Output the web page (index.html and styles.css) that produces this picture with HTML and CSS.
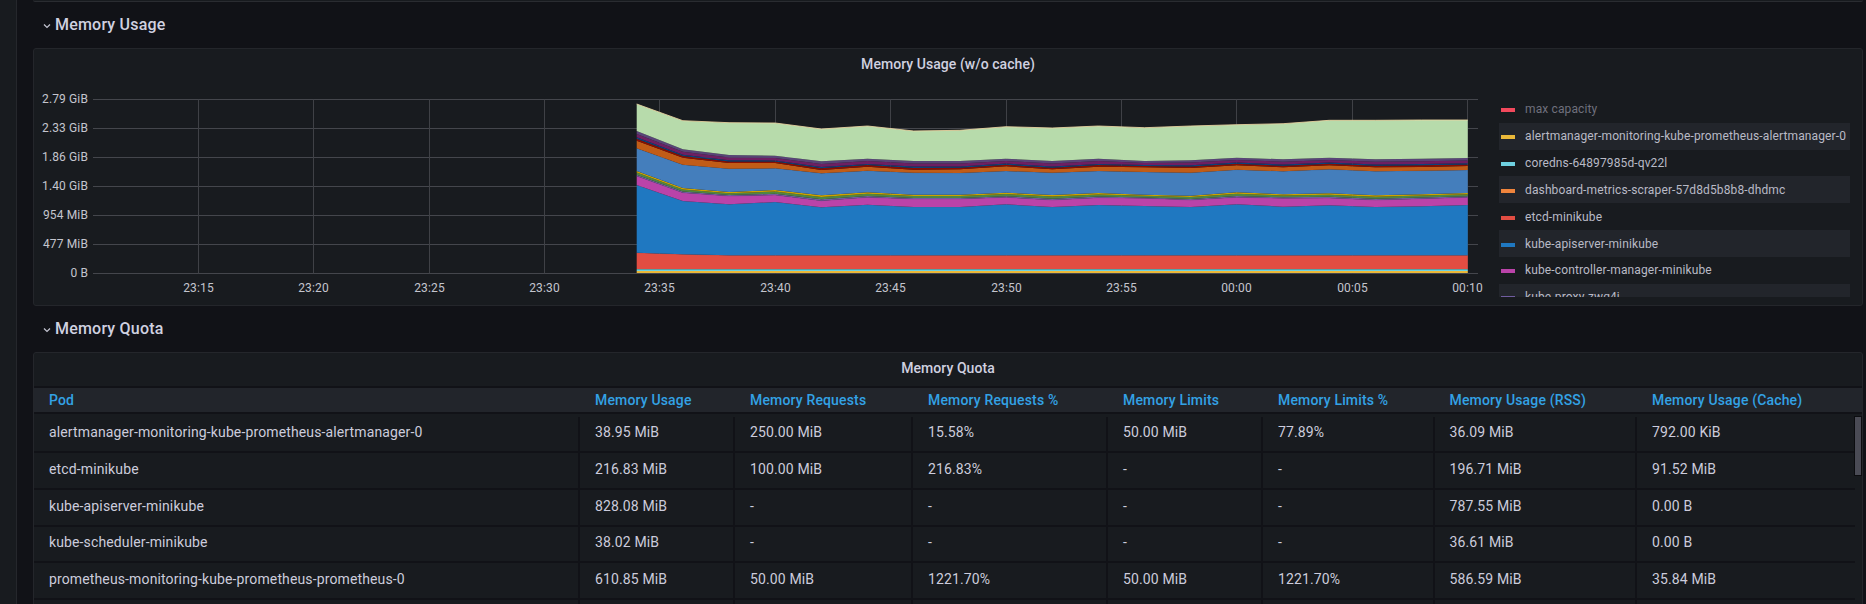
FILE: index.html
```html
<!DOCTYPE html>
<html lang="en">
<head>
  <meta charset="UTF-8">
  <title>Memory Usage</title>
  <link rel="stylesheet" href="styles.css">
</head>
<body>
<div class="sidebar"></div>
<div class="main">
  <div class="panel-sliver"></div>

  <div class="row-title">
    <svg class="chevron" width="8" height="6" viewBox="0 0 8 6"><path d="M1 1.5 L4 4.5 L7 1.5" fill="none" stroke="#c4c5d2" stroke-width="1.2"/></svg>
    Memory Usage
  </div>
  <div class="panel graph-panel">
    <div class="panel-title">Memory Usage (w/o cache)</div>
    <div class="graph-body">
      <svg id="chart" class="chart" width="1460" height="210"></svg>
      <div class="legend">
        <div class="legend-row dim"><span class="stripe s-maxcap"></span>max capacity</div>
        <div class="legend-row"><span class="stripe s-alert"></span>alertmanager-monitoring-kube-prometheus-alertmanager-0</div>
        <div class="legend-row"><span class="stripe s-coredns"></span>coredns-64897985d-qv22l</div>
        <div class="legend-row"><span class="stripe s-dash"></span>dashboard-metrics-scraper-57d8d5b8b8-dhdmc</div>
        <div class="legend-row"><span class="stripe s-etcd"></span>etcd-minikube</div>
        <div class="legend-row"><span class="stripe s-api"></span>kube-apiserver-minikube</div>
        <div class="legend-row"><span class="stripe s-ctrl"></span>kube-controller-manager-minikube</div>
        <div class="legend-row"><span class="stripe s-proxy"></span>kube-proxy-zwg4j</div>
      </div>
    </div>
  </div>

  <div class="row-title">
    <svg class="chevron" width="8" height="6" viewBox="0 0 8 6"><path d="M1 1.5 L4 4.5 L7 1.5" fill="none" stroke="#c4c5d2" stroke-width="1.2"/></svg>
    Memory Quota
  </div>
  <div class="panel table-panel">
    <div class="panel-title short">Memory Quota</div>
    <div class="thead cols">
      <div>Pod</div>
      <div>Memory Usage</div>
      <div>Memory Requests</div>
      <div>Memory Requests %</div>
      <div>Memory Limits</div>
      <div>Memory Limits %</div>
      <div>Memory Usage (RSS)</div>
      <div>Memory Usage (Cache)</div>
    </div>
    <div class="tbody">
      <div class="tr cols">
        <div>alertmanager-monitoring-kube-prometheus-alertmanager-0</div>
        <div>38.95 MiB</div><div>250.00 MiB</div><div>15.58%</div><div>50.00 MiB</div><div>77.89%</div><div>36.09 MiB</div><div>792.00 KiB</div>
      </div>
      <div class="tr cols">
        <div>etcd-minikube</div>
        <div>216.83 MiB</div><div>100.00 MiB</div><div>216.83%</div><div>-</div><div>-</div><div>196.71 MiB</div><div>91.52 MiB</div>
      </div>
      <div class="tr cols">
        <div>kube-apiserver-minikube</div>
        <div>828.08 MiB</div><div>-</div><div>-</div><div>-</div><div>-</div><div>787.55 MiB</div><div>0.00 B</div>
      </div>
      <div class="tr cols">
        <div>kube-scheduler-minikube</div>
        <div>38.02 MiB</div><div>-</div><div>-</div><div>-</div><div>-</div><div>36.61 MiB</div><div>0.00 B</div>
      </div>
      <div class="tr cols">
        <div>prometheus-monitoring-kube-prometheus-prometheus-0</div>
        <div>610.85 MiB</div><div>50.00 MiB</div><div>1221.70%</div><div>50.00 MiB</div><div>1221.70%</div><div>586.59 MiB</div><div>35.84 MiB</div>
      </div>
      <div class="tr cols">
        <div></div><div></div><div></div><div></div><div></div><div></div><div></div><div></div>
      </div>
    </div>
    <div class="scroll-thumb"></div>
  </div>
</div>
<script src="chart.js"></script>
</body>
</html>
```

FILE: styles.css
```css
* {
    box-sizing: border-box;
}
html, body {
    margin: 0;
    height: 604px;
    overflow: hidden;
}
body {
    display: flex;
    background-color: #111217;
    color: #ccccdc;
    font-family: Roboto, "Liberation Sans", sans-serif;
    font-size: 14px;
    letter-spacing: 0.13px;
}
.sidebar {
    width: 17px;
    flex: none;
    background-color: #181b1f;
    border-right: 1px solid #25272c;
}
.main {
    flex: 1;
    padding: 0 3px 0 16px;
}
.panel-sliver {
    height: 2px;
    background-color: #181b1f;
    border-bottom: 1px solid #2a2c31;
    border-radius: 0 0 2px 2px;
}
.row-title {
    display: flex;
    align-items: center;
    height: 46px;
    padding: 0 0 2px 10px;
    font-size: 16px;
    font-weight: 500;
    letter-spacing: 0.2px;
    color: #d0d1e0;
}
.chevron {
    margin: 4px 4px 0 0;
}
.panel {
    position: relative;
    background-color: #181b1f;
    border: 1px solid #24262b;
    border-radius: 3px;
    overflow: hidden;
}
.panel-title {
    height: 32px;
    line-height: 31px;
    text-align: center;
    font-weight: 500;
    letter-spacing: 0.05px;
    color: #d0d1e0;
}
.panel-title.short {
    height: 33px;
}

/* graph */
.graph-panel {
    height: 258px;
}
.graph-body {
    display: flex;
    padding-top: 9px;
}
.chart {
    flex: none;
    display: block;
}
.chart text {
    font-size: 12px;
    fill: #c4c5ce;
}
.legend {
    width: 351px;
    height: 200.7px;
    margin: 6px 0 0 5px;
    overflow: hidden;
    font-size: 12px;
    color: #b9bac6;
}
.legend-row {
    display: flex;
    align-items: center;
    height: 26.83px;
    padding-left: 2px;
}
.legend-row:nth-child(even) {
    background-color: #22252b;
}
.legend-row.dim {
    color: #6f707d;
}
.stripe {
    width: 14px;
    height: 4px;
    margin: 2px 10px 0 0;
    flex: none;
}
.s-maxcap { background-color: #f2495c; }
.s-alert { background-color: #eab839; }
.s-coredns { background-color: #6ed0e0; }
.s-dash { background-color: #ef843c; }
.s-etcd { background-color: #e24d42; }
.s-api { background-color: #1f78c1; }
.s-ctrl { background-color: #ba43a9; }
.s-proxy { background-color: #705da0; }

/* table */
.table-panel {
    height: 300px;
}
.cols {
    display: grid;
    grid-template-columns: 546px 155px 178px 195px 155px 171.5px 202.5px 1fr;
}
.cols > div {
    padding-left: 15px;
    white-space: nowrap;
}
.thead {
    align-items: center;
    height: 28px;
    background-color: #22252b;
    border-top: 2px solid #111217;
    border-bottom: 2px solid #111217;
    color: #33a2e5;
    font-weight: 500;
    letter-spacing: 0.16px;
}
.tbody {
    width: 1821px;
    padding-top: 2.5px;
}
.tr {
    height: 36.7px;
    border-bottom: 2px solid #111217;
}
.tr > div {
    display: flex;
    align-items: center;
    border-right: 2px solid #111217;
    padding-bottom: 3px;
}
.tr > div:last-child {
    border-right: none;
}
.scroll-thumb {
    position: absolute;
    top: 63px;
    right: 0;
    width: 8px;
    height: 60px;
    background-color: #4a4b55;
    border: 1px solid #0c0d10;
}
```

FILE: chart.js
```js
// stacked area chart. y values below are in thirds of a pixel, measured from the top of the svg
const top_ = [42,92,98,99,117,108,123,121,110,114,108,113,108,104,101,91,91,90,90];
const purpleTop = [123,178,195,197,214,206,213,213,206,213,206,213,211,203,208,203,208,206,204];
const orangeTop = [152,203,219,219,240,230,239,238,229,238,230,232,234,226,232,226,232,231,228];
const steelTop = [175,224,236,235,250,242,248,249,243,248,243,246,248,239,244,238,244,242,240];
const yellowTop = [243,294,306,300,316,307,314,314,308,315,309,314,317,307,313,310,316,313,309];
const magentaTop = [258,308,318,315,332,322,327,327,322,330,323,325,330,322,325,324,330,326,322];
const blueTop = [285,333,343,336,352,344,351,351,343,351,345,348,351,343,350,346,351,349,345];
const redTop = top_.map((_, i) => (i === 0 ? 488 : i === 1 ? 493 : 496));
const flat = v => top_.map(() => v);
const between = (a, b, f) => a.map((v, i) => v + (b[i] - v) * f);

// third value: draw a faint edge along the top of the layer
const layers = [
    [flat(543), "#eab839"],
    [flat(540), "#6ed0e0"],
    [flat(537), "#57a3a6"],
    [redTop, "#e24d42", true],
    [blueTop, "#1f78c1", true],
    [magentaTop, "#ba43a9", true],
    [between(yellowTop, magentaTop, 0.75), "#705da0"],
    [between(yellowTop, magentaTop, 0.3), "#508642"],
    [yellowTop, "#cca300"],
    [steelTop, "#447ebc", true],
    [orangeTop, "#c15c17"],
    [between(purpleTop, orangeTop, 0.8), "#890f02"],
    [between(purpleTop, orangeTop, 0.65), "#0a437c"],
    [between(purpleTop, orangeTop, 0.3), "#6d1f62"],
    [purpleTop, "#584477"],
    [top_, "#b7dbab"],
];

const yLabels = ["2.79 GiB", "2.33 GiB", "1.86 GiB", "1.40 GiB", "954 MiB", "477 MiB", "0 B"];
const xLabels = ["23:15", "23:20", "23:25", "23:30", "23:35", "23:40", "23:45", "23:50", "23:55", "00:00", "00:05", "00:10"];

const svg = document.getElementById("chart");

function add(tag, attrs, text) {
    const el = document.createElementNS("http://www.w3.org/2000/svg", tag);
    for (const k in attrs) el.setAttribute(k, attrs[k]);
    if (text) el.textContent = text;
    svg.appendChild(el);
}

yLabels.forEach((label, i) => {
    const y = 9.5 + i * 29;
    add("line", { x1: 59, x2: 1444, y1: y, y2: y, stroke: "#44464c" });
    add("text", { x: 54, y: y + 3.5, "text-anchor": "end" }, label);
});

xLabels.forEach((label, i) => {
    const x = Math.floor(164.3 + i * 115.4) + 0.5;
    add("line", { x1: x, x2: x, y1: 9.5, y2: 183.5, stroke: "#3f4146" });
    add("text", { x, y: 202, "text-anchor": "middle" }, label);
});

const px = i => 602.7 + i * 46.17;
const pts = edge => edge.map((v, i) => px(i) + "," + (v / 3).toFixed(1));
let below = flat(549);
layers.forEach(([edge, color, line]) => {
    add("polygon", { points: pts(edge).concat(pts(below).reverse()).join(" "), fill: color });
    if (line) add("polyline", { points: pts(edge).join(" "), fill: "none", stroke: "#50506a", "stroke-opacity": 0.4, "stroke-width": 0.7 });
    below = edge;
});
add("polyline", { points: pts(top_).join(" "), fill: "none", stroke: "#ecd6a2", "stroke-opacity": 0.85 });
```
